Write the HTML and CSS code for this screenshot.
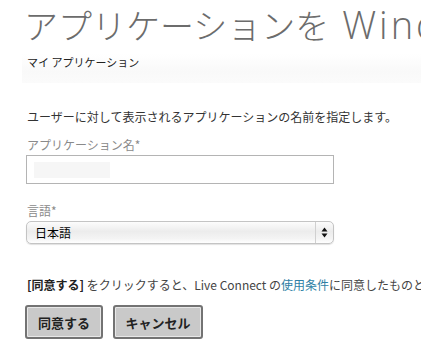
FILE: index.html
```html
<!DOCTYPE html>
<html lang="ja">
<head>
    <meta charset="UTF-8">
    <title>アプリケーションを Windows に登録</title>
    <link rel="stylesheet" href="styles.css">
</head>
<body>

    <h1 class="page-title">アプリケーションを<span class="title-latin"> Windows </span>に登録</h1>

    <div class="crumb-bar">マイ アプリケーション</div>

    <main class="form">
        <p class="intro">ユーザーに対して表示されるアプリケーションの名前を指定します。</p>

        <label class="field-label" for="app-name">アプリケーション名*</label>
        <input class="text-input" id="app-name" type="text">

        <label class="field-label lang-label" for="lang">言語*</label>
        <div class="select-wrap">
            <select class="lang-select" id="lang">
                <option>日本語</option>
            </select>
            <span class="select-arrows">
                <svg width="7" height="11" viewBox="0 0 7 11">
                    <path d="M3.5 0.5 L6.5 4.5 L0.5 4.5 Z" fill="#111"/>
                    <path d="M3.5 10.5 L6.5 6.5 L0.5 6.5 Z" fill="#111"/>
                </svg>
            </span>
        </div>

        <p class="terms"><b>[同意する]</b> をクリックすると、Live Connect の<a href="#">使用条件</a>に同意したものとみなされます。</p>

        <div class="actions">
            <button class="btn btn-agree">同意する</button>
            <button class="btn btn-cancel">キャンセル</button>
        </div>
    </main>

</body>
</html>
```

FILE: styles.css
```css
body {
    margin: 0;
    padding: 0;
    background: #fff;
    font-family: "Noto Sans CJK JP", "Noto Sans", sans-serif;
    color: #333;
    overflow: hidden;
}

.page-title {
    margin: 0;
    padding: 2px 0 0 24px;
    font-size: 34px;
    font-weight: 300;
    line-height: 44px;
    color: #6c6c6c;
    white-space: nowrap;
}

.title-latin {
    font-family: "Open Sans", "Noto Sans", sans-serif;
    font-size: 38px;
    font-weight: 300;
    letter-spacing: 3px;
}

.crumb-bar {
    margin: 7px 0 0 22px;
    padding: 1px 0 13px 5px;
    font-size: 11px;
    line-height: 15px;
    color: #222;
    background: linear-gradient(#fff, #f9f9f9 60%, #fbfbfb);
}

.form {
    padding: 0 0 0 27px;
}

.intro {
    margin: 26px 0 0;
    font-size: 12px;
    line-height: 16px;
    color: #333;
    white-space: nowrap;
}

.field-label {
    display: block;
    margin-top: 12px;
    font-size: 12px;
    line-height: 15px;
    color: #8a8a8a;
}

.lang-label {
    margin-top: 19px;
}

.text-input {
    display: block;
    box-sizing: border-box;
    width: 308px;
    height: 29px;
    margin: 3px 0 0 -1px;
    border: 1px solid #b4b4b4;
    background: #fff linear-gradient(#f6f6f6, #f6f6f6) no-repeat 7px 6px / 76px 16px;
    outline: none;
}

.select-wrap {
    position: relative;
    width: 308px;
    margin: 3px 0 0 -1px;
}

.lang-select {
    display: block;
    box-sizing: border-box;
    width: 308px;
    height: 23px;
    padding: 0 0 0 8px;
    border: 1px solid #c4c4c4;
    border-radius: 5px;
    background: linear-gradient(#fcfcfc, #ececec 45%, #f4f4f4 80%, #fff);
    box-shadow: 0 1px 1px rgba(0, 0, 0, 0.12);
    font-family: "Noto Sans CJK JP", sans-serif;
    font-size: 12px;
    color: #000;
    -webkit-appearance: none;
    appearance: none;
}

.select-arrows {
    position: absolute;
    top: 1px;
    right: 1px;
    width: 17px;
    height: 21px;
    border-left: 1px solid #d0d0d0;
    display: flex;
    align-items: center;
    justify-content: center;
    pointer-events: none;
}

.terms {
    margin: 33px 0 0;
    font-size: 12px;
    line-height: 16px;
    color: #444;
    white-space: nowrap;
}

.terms b {
    color: #222;
}

.terms a {
    color: #2f7fa5;
    text-decoration: none;
}

.actions {
    display: flex;
    gap: 10px;
    margin: 12px 0 0 -2px;
}

.btn {
    height: 34px;
    padding: 0;
    border: 2px solid #737373;
    border-radius: 3px;
    background: #c9c9c9;
    box-shadow: inset 0 0 0 1px #e8e8e8;
    font-family: "Noto Sans CJK JP", sans-serif;
    font-size: 13px;
    font-weight: bold;
    color: #222;
    white-space: nowrap;
}

.btn-agree {
    width: 78px;
}

.btn-cancel {
    width: 90px;
}
```
